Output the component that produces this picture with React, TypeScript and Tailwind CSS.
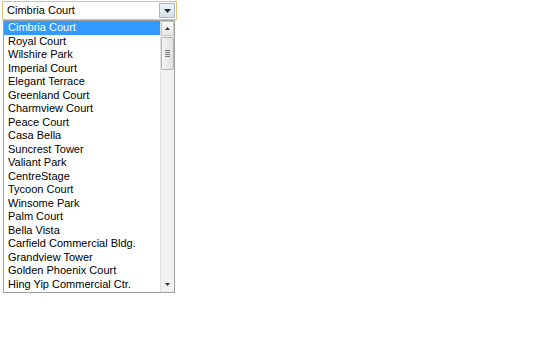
const items = [
  "Cimbria Court",
  "Royal Court",
  "Wilshire Park",
  "Imperial Court",
  "Elegant Terrace",
  "Greenland Court",
  "Charmview Court",
  "Peace Court",
  "Casa Bella",
  "Suncrest Tower",
  "Valiant Park",
  "CentreStage",
  "Tycoon Court",
  "Winsome Park",
  "Palm Court",
  "Bella Vista",
  "Carfield Commercial Bldg.",
  "Grandview Tower",
  "Golden Phoenix Court",
  "Hing Yip Commercial Ctr.",
];

export default function App() {
  return (
    <div className="w-[540px] h-[338px] bg-white pt-px pl-[2px]" style={{ fontFamily: "'Liberation Sans', Arial, sans-serif" }}>
      {/* closed select */}
      <div className="w-[175px] h-[19px] border border-[#e3c27a] flex items-stretch">
        <div className="flex-1 bg-white text-[11px] leading-[17px] text-black pl-[4px]">Cimbria Court</div>
        <div className="w-[16px] my-px mr-px bg-gradient-to-b from-[#eef3f8] to-[#d6dfe9] border border-[#a9b8c8] flex items-center justify-center">
          <svg width="7" height="4" viewBox="0 0 7 4"><path d="M0 0h7L3.5 4z" fill="#1d2a38" /></svg>
        </div>
      </div>
      {/* open list */}
      <div className="ml-px w-[172px] h-[273px] border border-[#a0a0a0] flex">
        <div className="flex-1 flex flex-col">
          {items.map((t, i) => (
            <div
              key={t}
              className={`h-[13.5px] text-[11px] leading-[13.5px] pl-[4px] whitespace-nowrap ${i === 0 ? "bg-[#3399ff] text-white" : "text-black"}`}
            >
              {t}
            </div>
          ))}
        </div>
        <div className="w-[14px] flex flex-col bg-[#f1f1f1] border-l border-[#e2e2e2]">
          <div className="h-[15px] flex items-center justify-center border border-[#c8c8c8] bg-gradient-to-b from-[#fafafa] to-[#e6e6e6] rounded-[1px]">
            <svg width="5" height="3" viewBox="0 0 5 3"><path d="M0 3h5L2.5 0z" fill="#333" /></svg>
          </div>
          <div className="h-[33px] mt-px flex flex-col items-center justify-center gap-[1px] border border-[#b5b5b5] bg-gradient-to-r from-[#f4f4f4] to-[#e0e0e0] rounded-[2px]">
            <div className="w-[5px] h-px bg-[#777]" />
            <div className="w-[5px] h-px bg-[#777]" />
            <div className="w-[5px] h-px bg-[#777]" />
            <div className="w-[5px] h-px bg-[#777]" />
          </div>
          <div className="flex-1" />
          <div className="h-[15px] flex items-center justify-center">
            <svg width="5" height="3" viewBox="0 0 5 3"><path d="M0 0h5L2.5 3z" fill="#333" /></svg>
          </div>
        </div>
      </div>
    </div>
  );
}
